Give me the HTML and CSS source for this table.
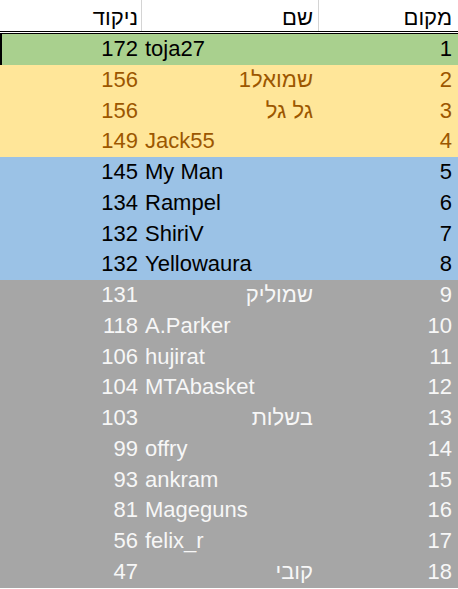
FILE: index.html
```html
<!DOCTYPE html>
<html lang="he">
<head>
<meta charset="utf-8">
<link rel="stylesheet" href="styles.css">
</head>
<body>
<div class="sheet" dir="rtl">
  <div class="row head">
    <div class="c place">מקום</div>
    <div class="c name">שם</div>
    <div class="c score">ניקוד</div>
  </div>
  <div class="body">
    <div class="row green first"><div class="c place">1</div><div class="c name" dir="auto">toja27</div><div class="c score">172</div></div>
    <div class="row yellow"><div class="c place">2</div><div class="c name" dir="auto">שמואל1</div><div class="c score">156</div></div>
    <div class="row yellow"><div class="c place">3</div><div class="c name" dir="auto">גל גל</div><div class="c score">156</div></div>
    <div class="row yellow"><div class="c place">4</div><div class="c name" dir="auto">Jack55</div><div class="c score">149</div></div>
    <div class="row blue"><div class="c place">5</div><div class="c name" dir="auto">My Man</div><div class="c score">145</div></div>
    <div class="row blue"><div class="c place">6</div><div class="c name" dir="auto">Rampel</div><div class="c score">134</div></div>
    <div class="row blue"><div class="c place">7</div><div class="c name" dir="auto">ShiriV</div><div class="c score">132</div></div>
    <div class="row blue"><div class="c place">8</div><div class="c name" dir="auto">Yellowaura</div><div class="c score">132</div></div>
    <div class="row gray"><div class="c place">9</div><div class="c name" dir="auto">שמוליק</div><div class="c score">131</div></div>
    <div class="row gray"><div class="c place">10</div><div class="c name" dir="auto">A.Parker</div><div class="c score">118</div></div>
    <div class="row gray"><div class="c place">11</div><div class="c name" dir="auto">hujirat</div><div class="c score">106</div></div>
    <div class="row gray"><div class="c place">12</div><div class="c name" dir="auto">MTAbasket</div><div class="c score">104</div></div>
    <div class="row gray"><div class="c place">13</div><div class="c name" dir="auto">בשלות</div><div class="c score">103</div></div>
    <div class="row gray"><div class="c place">14</div><div class="c name" dir="auto">offry</div><div class="c score">99</div></div>
    <div class="row gray"><div class="c place">15</div><div class="c name" dir="auto">ankram</div><div class="c score">93</div></div>
    <div class="row gray"><div class="c place">16</div><div class="c name" dir="auto">Mageguns</div><div class="c score">81</div></div>
    <div class="row gray"><div class="c place">17</div><div class="c name" dir="auto">felix_r</div><div class="c score">56</div></div>
    <div class="row gray"><div class="c place">18</div><div class="c name" dir="auto">קובי</div><div class="c score">47</div></div>
  </div>
</div>
</body>
</html>
```
FILE: styles.css
```css
html, body {
  margin: 0;
  padding: 0;
  background: #ffffff;
}
.sheet {
  width: 458px;
  height: 589px;
  overflow: hidden;
  font-family: "Liberation Sans", Arial, sans-serif;
  font-size: 22px;
  color: #000;
}
.row {
  display: grid;
  grid-template-columns: 140px 177px 141px;
  height: 30.75px;
  line-height: 30.75px;
}
.head {
  height: 31px;
  line-height: 27px;
  background: #fff;
  border-bottom: 3px double #000;
}
.head .c {
  padding-top: 4px;
}
.head .place,
.head .name {
  border-left: 1px solid #d4d4d4;
}
.c {
  white-space: nowrap;
  overflow: hidden;
}
.place {
  text-align: right;
  padding-right: 6px;
}
.name {
  text-align: start;
  padding: 0 5px 0 4px;
}
.score {
  text-align: right;
  padding-right: 3px;
}
.first .score {
  border-left: 2px solid #000;
}
.green { background: #a9d08e; color: #000; }
.yellow { background: #ffe699; color: #9c5700; }
.blue { background: #9bc2e6; color: #000; }
.gray { background: #a6a6a6; color: #f7f7f7; }
```
